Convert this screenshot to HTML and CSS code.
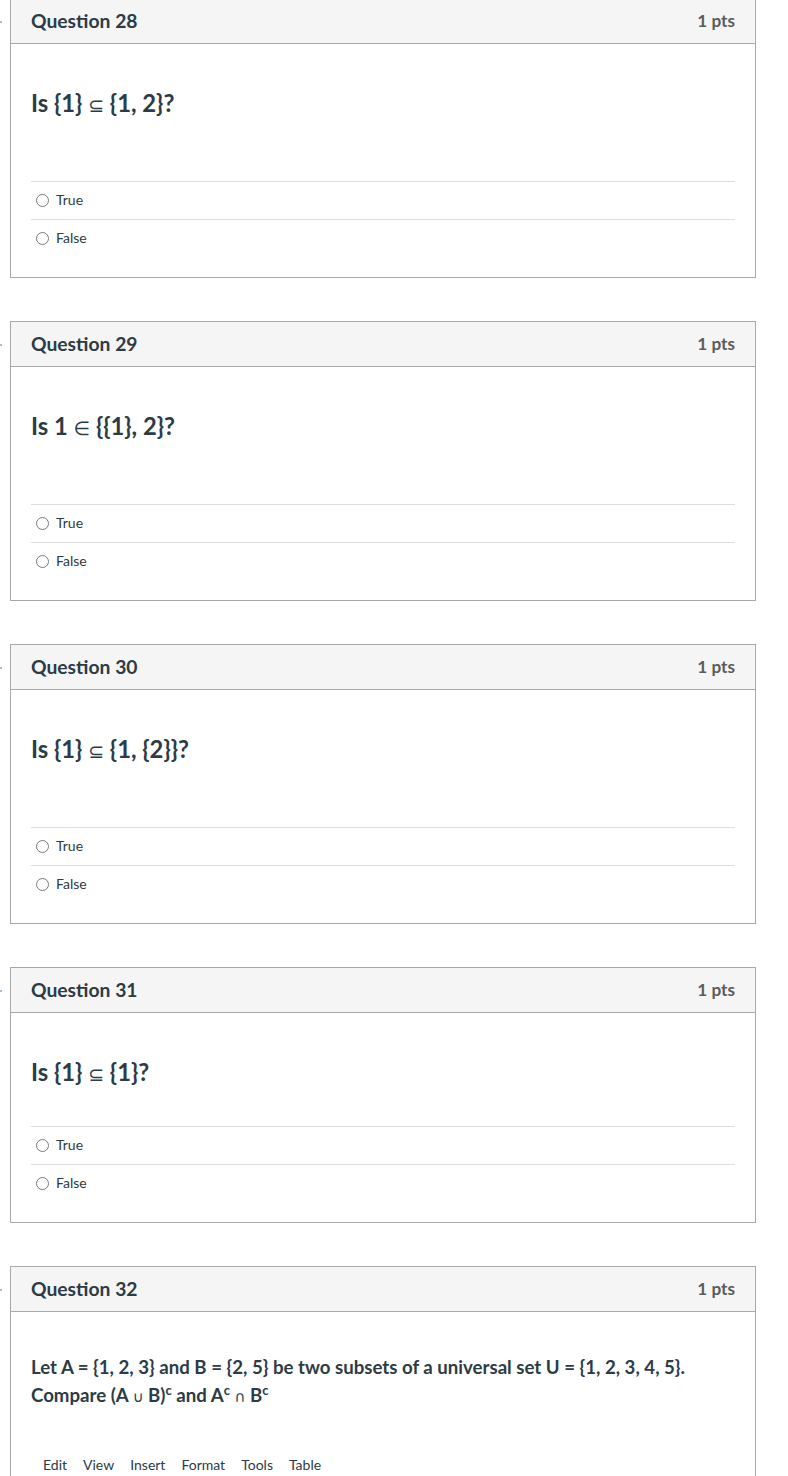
FILE: index.html
```html
<!DOCTYPE html>
<html lang="en">
<head>
<meta charset="utf-8">
<title>Quiz</title>
<link rel="stylesheet" href="styles.css">
</head>
<body>
<div class="page">
  <div class="question">
    <span class="flag"></span>
    <div class="q-header"><span class="q-name">Question 28</span><span class="q-pts">1 pts</span></div>
    <div class="q-body">
      <div class="q-text q-text--spaced">Is {1} <span class="sym">⊆</span> {1, 2}?</div>
      <div class="answers">
        <div class="answer"><span class="radio"></span>True</div>
        <div class="answer"><span class="radio"></span>False</div>
      </div>
    </div>
  </div>

  <div class="question">
    <span class="flag"></span>
    <div class="q-header"><span class="q-name">Question 29</span><span class="q-pts">1 pts</span></div>
    <div class="q-body">
      <div class="q-text q-text--spaced">Is 1 <span class="sym">∈</span> {{1}, 2}?</div>
      <div class="answers">
        <div class="answer"><span class="radio"></span>True</div>
        <div class="answer"><span class="radio"></span>False</div>
      </div>
    </div>
  </div>

  <div class="question">
    <span class="flag"></span>
    <div class="q-header"><span class="q-name">Question 30</span><span class="q-pts">1 pts</span></div>
    <div class="q-body">
      <div class="q-text q-text--spaced">Is {1} <span class="sym">⊆</span> {1, {2}}?</div>
      <div class="answers">
        <div class="answer"><span class="radio"></span>True</div>
        <div class="answer"><span class="radio"></span>False</div>
      </div>
    </div>
  </div>

  <div class="question">
    <span class="flag"></span>
    <div class="q-header"><span class="q-name">Question 31</span><span class="q-pts">1 pts</span></div>
    <div class="q-body">
      <div class="q-text">Is {1} <span class="sym">⊆</span> {1}?</div>
      <div class="answers">
        <div class="answer"><span class="radio"></span>True</div>
        <div class="answer"><span class="radio"></span>False</div>
      </div>
    </div>
  </div>

  <div class="question">
    <span class="flag"></span>
    <div class="q-header"><span class="q-name">Question 32</span><span class="q-pts">1 pts</span></div>
    <div class="q-body q-body--essay">
      <div class="q-text q-text--essay">Let A = {1, 2, 3} and B = {2, 5} be two subsets of a universal set U = {1, 2, 3, 4, 5}.<br>Compare (A <span class="sym">∪</span> B)<sup>c</sup> and A<sup>c</sup> <span class="sym">∩</span> B<sup>c</sup></div>
      <div class="menubar">
        <span class="menu-item">Edit</span>
        <span class="menu-item">View</span>
        <span class="menu-item">Insert</span>
        <span class="menu-item">Format</span>
        <span class="menu-item">Tools</span>
        <span class="menu-item">Table</span>
      </div>
    </div>
  </div>
</div>
</body>
</html>
```

FILE: styles.css
```css
html, body {
  margin: 0;
  padding: 0;
  background: #ffffff;
}

body {
  font-family: Lato, "Open Sans", "Liberation Sans", sans-serif;
  color: #2d3b45;
}

.page {
  margin-top: -2px;
  margin-left: 10px;
  width: 746px;
  display: flex;
  flex-direction: column;
  gap: 43px;
  padding-bottom: 200px;
}

.question {
  position: relative;
  border: 1px solid #a9a9a9;
  background: #ffffff;
}

.flag {
  position: absolute;
  left: -11px;
  top: 22px;
  width: 2px;
  height: 2px;
  background: #9cc0de;
}

.q-header {
  box-sizing: border-box;
  height: 45px;
  background: #f5f5f5;
  border-bottom: 1px solid #a9a9a9;
  display: flex;
  align-items: center;
  justify-content: space-between;
  padding: 0 20px 2px;
}

.q-name {
  font-size: 19.3px;
  font-weight: 700;
  color: #2d3b45;
}

.q-pts {
  font-size: 17.2px;
  font-weight: 700;
  color: #5b5b5b;
}

.q-body {
  padding: 44px 20px 20px;
}

.q-body--essay {
  padding-top: 41px;
}

.q-text {
  font-size: 23.8px;
  font-weight: 700;
  line-height: 30px;
  height: 30px;
  margin-bottom: 39px;
}

.q-text--spaced {
  margin-bottom: 63px;
}

.q-text--essay {
  font-size: 18.65px;
  line-height: 28px;
  height: auto;
  margin-bottom: 46px;
}

.q-text sup {
  font-size: 13px;
  line-height: 0;
  vertical-align: 7px;
}

.sym {
  font-family: "DejaVu Sans", sans-serif;
  font-weight: 400;
  font-size: 0.8em;
  line-height: 0;
}

.answers {
  display: flex;
  flex-direction: column;
}

.answer {
  box-sizing: border-box;
  height: 38px;
  border-top: 1px solid #dddddd;
  display: flex;
  align-items: center;
  padding-left: 5px;
  padding-bottom: 2px;
  font-size: 14px;
  color: #2d3b45;
}

.radio {
  box-sizing: border-box;
  width: 13px;
  height: 13px;
  border: 1px solid #7a7a7a;
  border-radius: 50%;
  margin-right: 7px;
  margin-top: 2px;
  background: #fff;
}

.menubar {
  display: flex;
  padding-left: 4px;
  line-height: 20px;
}

.menu-item {
  font-size: 14px;
  color: #2d3b45;
  padding: 0 8px;
}
```
